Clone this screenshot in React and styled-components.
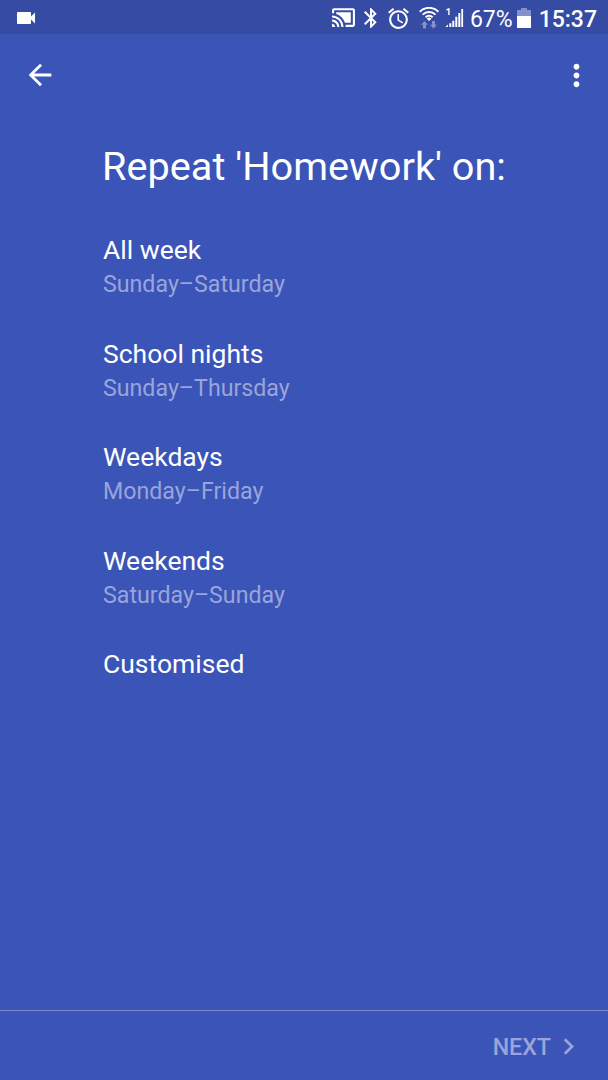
import React from "react";
import styled, { createGlobalStyle } from "styled-components";
import {
  MdAccessAlarm,
  MdArrowBack,
  MdBluetooth,
  MdCastConnected,
  MdChevronRight,
  MdMoreVert,
  MdVideocam,
} from "react-icons/md";

const options = [
  { title: "All week", days: "Sunday–Saturday" },
  { title: "School nights", days: "Sunday–Thursday" },
  { title: "Weekdays", days: "Monday–Friday" },
  { title: "Weekends", days: "Saturday–Sunday" },
  { title: "Customised" },
];

const WifiIcon = () => (
  <svg width="22" height="22" viewBox="0 0 22 22" fill="none">
    <g stroke="#fff" strokeWidth="2">
      <path d="M1.800 4.700a13.200 13.200 0 0 1 18.600 0" />
      <path d="M4.700 7.600a9.100 9.100 0 0 1 12.800 0" />
      <path d="M7.600 10.300a5 5 0 0 1 7 0" />
    </g>
    <path d="M11.100 14 8.700 11.700a3.400 3.400 0 0 1 4.800 0z" fill="#fff" />
    <g fill="#8491cb">
      <path d="M6.500 14 10 17.800H8V21.500H5v-3.700H3z" />
      <path d="M15.500 21.500 12 17.700H14V14h3v3.700h2z" />
    </g>
  </svg>
);

const SignalIcon = () => (
  <svg width="19" height="20" viewBox="0 0 19 20" fill="#fff">
    <path d="M1.500 1.200 3.300.3h1.300v6.600H3.200V2.100l-1.700.6z" />
    <path d="M.3 19 3 16.600V19zM4.300 15.300h2V19h-2zM7.300 12.800h2V19h-2zM10.300 8.700h2V19h-2zM13.300 5h2v14h-2zM16.300 1h1.800v18h-1.800z" />
  </svg>
);

const BatteryIcon = () => (
  <svg width="14" height="20" viewBox="0 0 14 20">
    <path d="M4 0h6v2h4v6H0V2h4z" fill="#8491cb" />
    <path d="M0 8h14v12H0z" fill="#fff" />
  </svg>
);

const App = () => {
  return (
    <Screen>
      <GlobalStyle />
      <StatusBar>
        <MdVideocam size={24} />
        <StatusIcons>
          <Cast size={25} />
          <Bluetooth size={24} />
          <Alarm size={25} />
          <Wifi>
            <WifiIcon />
          </Wifi>
          <SignalIcon />
          <Percent>67%</Percent>
          <BatteryIcon />
          <Clock>15:37</Clock>
        </StatusIcons>
      </StatusBar>

      <Toolbar>
        <IconButton aria-label="Back">
          <MdArrowBack size={34} />
        </IconButton>
        <IconButton aria-label="More options">
          <MdMoreVert size={35} />
        </IconButton>
      </Toolbar>

      <Content>
        <Title>Repeat 'Homework' on:</Title>
        <OptionList>
          {options.map((option) => (
            <Option key={option.title}>
              <OptionTitle>{option.title}</OptionTitle>
              {option.days && <OptionDays>{option.days}</OptionDays>}
            </Option>
          ))}
        </OptionList>
      </Content>

      <Footer>
        <NextButton>
          <span>NEXT</span>
          <MdChevronRight size={33} />
        </NextButton>
      </Footer>
    </Screen>
  );
};

const GlobalStyle = createGlobalStyle`
  * {
    box-sizing: border-box;
  }

  body {
    margin: 0;
    background: #3b54b8;
    font-family: Roboto, sans-serif;
  }

  svg {
    display: block;
    flex-shrink: 0;
  }
`;

const Screen = styled.div`
  display: flex;
  flex-direction: column;
  width: 608px;
  height: 1080px;
  overflow: hidden;
  background: #3b54b8;
  color: #fff;
`;

const StatusBar = styled.header`
  display: flex;
  align-items: center;
  justify-content: space-between;
  height: 34px;
  padding: 2px 11px 0 14px;
  background: #354ba4;
`;

const StatusIcons = styled.div`
  display: flex;
  align-items: center;
`;

const Cast = styled(MdCastConnected)`
  margin-bottom: 1px;
`;

const Bluetooth = styled(MdBluetooth)`
  margin-left: 3px;
`;

const Alarm = styled(MdAccessAlarm)`
  margin-left: 3px;
`;

const Wifi = styled.div`
  margin-left: 7px;
  margin-right: 5px;
`;

const Percent = styled.span`
  margin: 4px 4px 0 6px;
  font-size: 23px;
  line-height: 26px;
`;

const Clock = styled.span`
  margin: 4px 0 0 8px;
  font-size: 23px;
  font-weight: 500;
  line-height: 26px;
`;

const Toolbar = styled.nav`
  display: flex;
  align-items: center;
  justify-content: space-between;
  height: 82px;
  padding: 0 14px 0 23px;
`;

const IconButton = styled.button`
  padding: 0;
  border: none;
  background: none;
  color: inherit;
  cursor: pointer;
`;

const Content = styled.main`
  flex: 1;
  padding: 27px 0 0 103px;
`;

const Title = styled.h1`
  margin: 0 0 0 -1px;
  font-size: 39.7px;
  font-weight: 400;
  line-height: 48px;
  white-space: nowrap;
`;

const OptionList = styled.ul`
  margin: 0;
  padding: 41.4px 0 0;
  list-style: none;
`;

const Option = styled.li`
  height: 103.4px;
  cursor: pointer;
`;

const OptionTitle = styled.div`
  font-size: 26.5px;
  line-height: 36px;
`;

const OptionDays = styled.div`
  color: #99a5da;
  font-size: 23.2px;
  line-height: 33px;
`;

const Footer = styled.footer`
  display: flex;
  justify-content: flex-end;
  height: 70px;
  padding-right: 23px;
  border-top: 1px solid #7c8bd0;
`;

const NextButton = styled.button`
  display: flex;
  align-items: center;
  gap: 1px;
  padding: 1px 0 0;
  border: none;
  background: none;
  color: #99a5da;
  font-family: inherit;
  font-size: 23.2px;
  font-weight: 500;
  line-height: 28px;
  cursor: pointer;

  span {
    padding-top: 2px;
  }
`;

export default App;
